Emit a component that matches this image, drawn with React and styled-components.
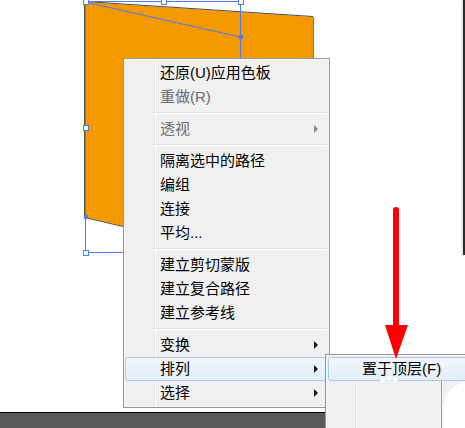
import React from 'react';
import styled, { createGlobalStyle } from 'styled-components';

const Global = createGlobalStyle`
  html, body { margin: 0; padding: 0; background: #fff; }
  body { font-family: "Liberation Sans", "Noto Sans CJK SC", sans-serif; }
`;

const Screen = styled.div`
  position: relative;
  width: 465px;
  height: 428px;
  overflow: hidden;
  display: flex;
  flex-direction: column;
  background: #fff;
`;

const Canvas = styled.div`
  position: relative;
  flex: 1;
  background: #fff;
`;

const Artwork = styled.svg`
  position: absolute;
  left: 0;
  top: 0;
`;

const DocEdge = styled.div`
  position: absolute;
  left: 463px;
  top: 0;
  width: 2px;
  height: 255px;
  background: #2a2a2a;
  box-shadow: -1px 0 2px rgba(0, 0, 0, 0.18);
`;

const StatusBar = styled.div`
  height: 15px;
  border-top: 1px solid #000;
  background: #5a5a5a;
`;

const Menu = styled.div`
  position: absolute;
  box-sizing: border-box;
  left: ${(p) => p.$left}px;
  top: ${(p) => p.$top}px;
  width: ${(p) => p.$width}px;
  ${(p) => (p.$height ? `height: ${p.$height}px;` : '')}
  border: 1px solid #979797;
  background: #f0f0f0;
  padding: ${(p) => p.$pad};
  font-size: 15px;
  box-shadow: inset 0 0 0 1px #f5f5f5;
  &::before {
    content: '';
    position: absolute;
    left: ${(p) => p.$gutter}px;
    top: 2px;
    bottom: 3px;
    width: 1px;
    background: #e2e3e3;
    border-right: 1px solid #ffffff;
  }
`;

const Item = styled.div`
  position: relative;
  box-sizing: border-box;
  height: 24px;
  display: flex;
  align-items: center;
  padding: 0 7px 0 ${(p) => p.$indent}px;
  border: 1px solid ${(p) => (p.$active ? '#a9cbee' : 'transparent')};
  border-radius: 3px;
  background: ${(p) =>
    p.$active ? 'linear-gradient(#f1f6fc, #e3edf9)' : 'transparent'};
  color: ${(p) => (p.$disabled ? '#6d6d6d' : '#000')};
  line-height: 22px;
  white-space: nowrap;
`;

const SubArrow = styled.span`
  margin-left: auto;
  width: 0;
  height: 0;
  border-top: 4px solid transparent;
  border-bottom: 4px solid transparent;
  border-left: 4px solid ${(p) => (p.$disabled ? '#8a8a8a' : '#1a1a1a')};
`;

const Separator = styled.div`
  position: relative;
  height: 8px;
  margin-left: 29px;
  &::after {
    content: '';
    position: absolute;
    left: 0;
    right: 0;
    top: 3px;
    height: 1px;
    background: #e0e0e0;
    border-bottom: 1px solid #fff;
  }
`;

const SideCut = styled.div`
  position: absolute;
  left: 115px;
  top: 26px;
  right: -20px;
  bottom: -20px;
  border-left: 1px solid #a0a0a0;
  background: #f0f0f0;
  &::after {
    content: '';
    position: absolute;
    left: 1px;
    top: 0;
    right: 0;
    bottom: 0;
    background: #fff;
    border-top-left-radius: 28px;
  }
`;

const Overlay = styled.svg`
  position: absolute;
  left: 0;
  top: 0;
  pointer-events: none;
`;

const BLUE = '#4a7cf2';

const mainItems = [
  { label: '还原(U)应用色板' },
  { label: '重做(R)', disabled: true },
  'sep',
  { label: '透视', disabled: true, sub: true },
  'sep',
  { label: '隔离选中的路径' },
  { label: '编组' },
  { label: '连接' },
  { label: '平均...' },
  'sep',
  { label: '建立剪切蒙版' },
  { label: '建立复合路径' },
  { label: '建立参考线' },
  'sep',
  { label: '变换', sub: true },
  { label: '排列', sub: true, active: true },
  { label: '选择', sub: true },
];

function Handle({ x, y, filled }) {
  const s = filled ? 4 : 5;
  return (
    <rect
      x={x - s / 2}
      y={y - s / 2}
      width={s}
      height={s}
      fill={filled ? BLUE : '#fff'}
      stroke={BLUE}
      strokeWidth={filled ? 0 : 1}
      shapeRendering="crispEdges"
    />
  );
}

export default function App() {
  return (
    <>
      <Global />
      <Screen>
        <Canvas>
          <Artwork width="465" height="412" viewBox="0 0 465 412">
            <polygon points="85,2 313,17 313,280 123,226 85,217" fill="#f49a00" />
            <line x1="85" y1="1.5" x2="313" y2="16.5" stroke="#4a4a4a" strokeWidth="1" />
            <line x1="85" y1="217.5" x2="313" y2="271.5" stroke="#4a4a4a" strokeWidth="1" />
            <line x1="84.5" y1="2" x2="84.5" y2="217" stroke="#555" strokeWidth="1" />
            <line x1="313.5" y1="17" x2="313.5" y2="280" stroke={BLUE} strokeWidth="1" />
            <line x1="85" y1="2" x2="240" y2="37" stroke={BLUE} strokeWidth="1" />
            <rect
              x="85.5"
              y="1.5"
              width="155"
              height="251"
              fill="none"
              stroke={BLUE}
              strokeWidth="1"
              shapeRendering="crispEdges"
            />
            <Handle x={85.5} y={1.5} />
            <Handle x={163.5} y={1.5} />
            <Handle x={240.5} y={1.5} />
            <Handle x={85.5} y={127.5} />
            <Handle x={85.5} y={252.5} />
            <Handle x={240.5} y={37} filled />
            <Handle x={85.5} y={217} filled />
          </Artwork>
          <DocEdge />
        </Canvas>
        <StatusBar />

        <Menu $left={123} $top={58} $width={207} $pad="2px 3px 2px 1px" $gutter={30}>
          {mainItems.map((it, i) =>
            it === 'sep' ? (
              <Separator key={i} />
            ) : (
              <Item key={i} $indent={34} $disabled={it.disabled} $active={it.active}>
                {it.label}
                {it.sub && <SubArrow $disabled={it.disabled} />}
              </Item>
            )
          )}
        </Menu>

        <Menu $left={325} $top={354} $width={170} $height={100} $pad="2px 0 2px 2px" $gutter={29}>
          <SideCut />
          <Item $indent={33} $active>
            置于顶层(F)
          </Item>
        </Menu>

        <Overlay width="465" height="428" viewBox="0 0 465 428">
          <g fill="#fff" opacity="0.9">
            <circle cx="383" cy="380" r="2.6" />
            <circle cx="389" cy="378.5" r="2.8" />
            <circle cx="395" cy="380" r="2.6" />
          </g>
          <line x1="396" y1="210" x2="396" y2="330" stroke="#ff0000" strokeWidth="6" strokeLinecap="round" />
          <polygon points="385,325 408,325 396,359" fill="#ff0000" />
        </Overlay>
      </Screen>
    </>
  );
}
